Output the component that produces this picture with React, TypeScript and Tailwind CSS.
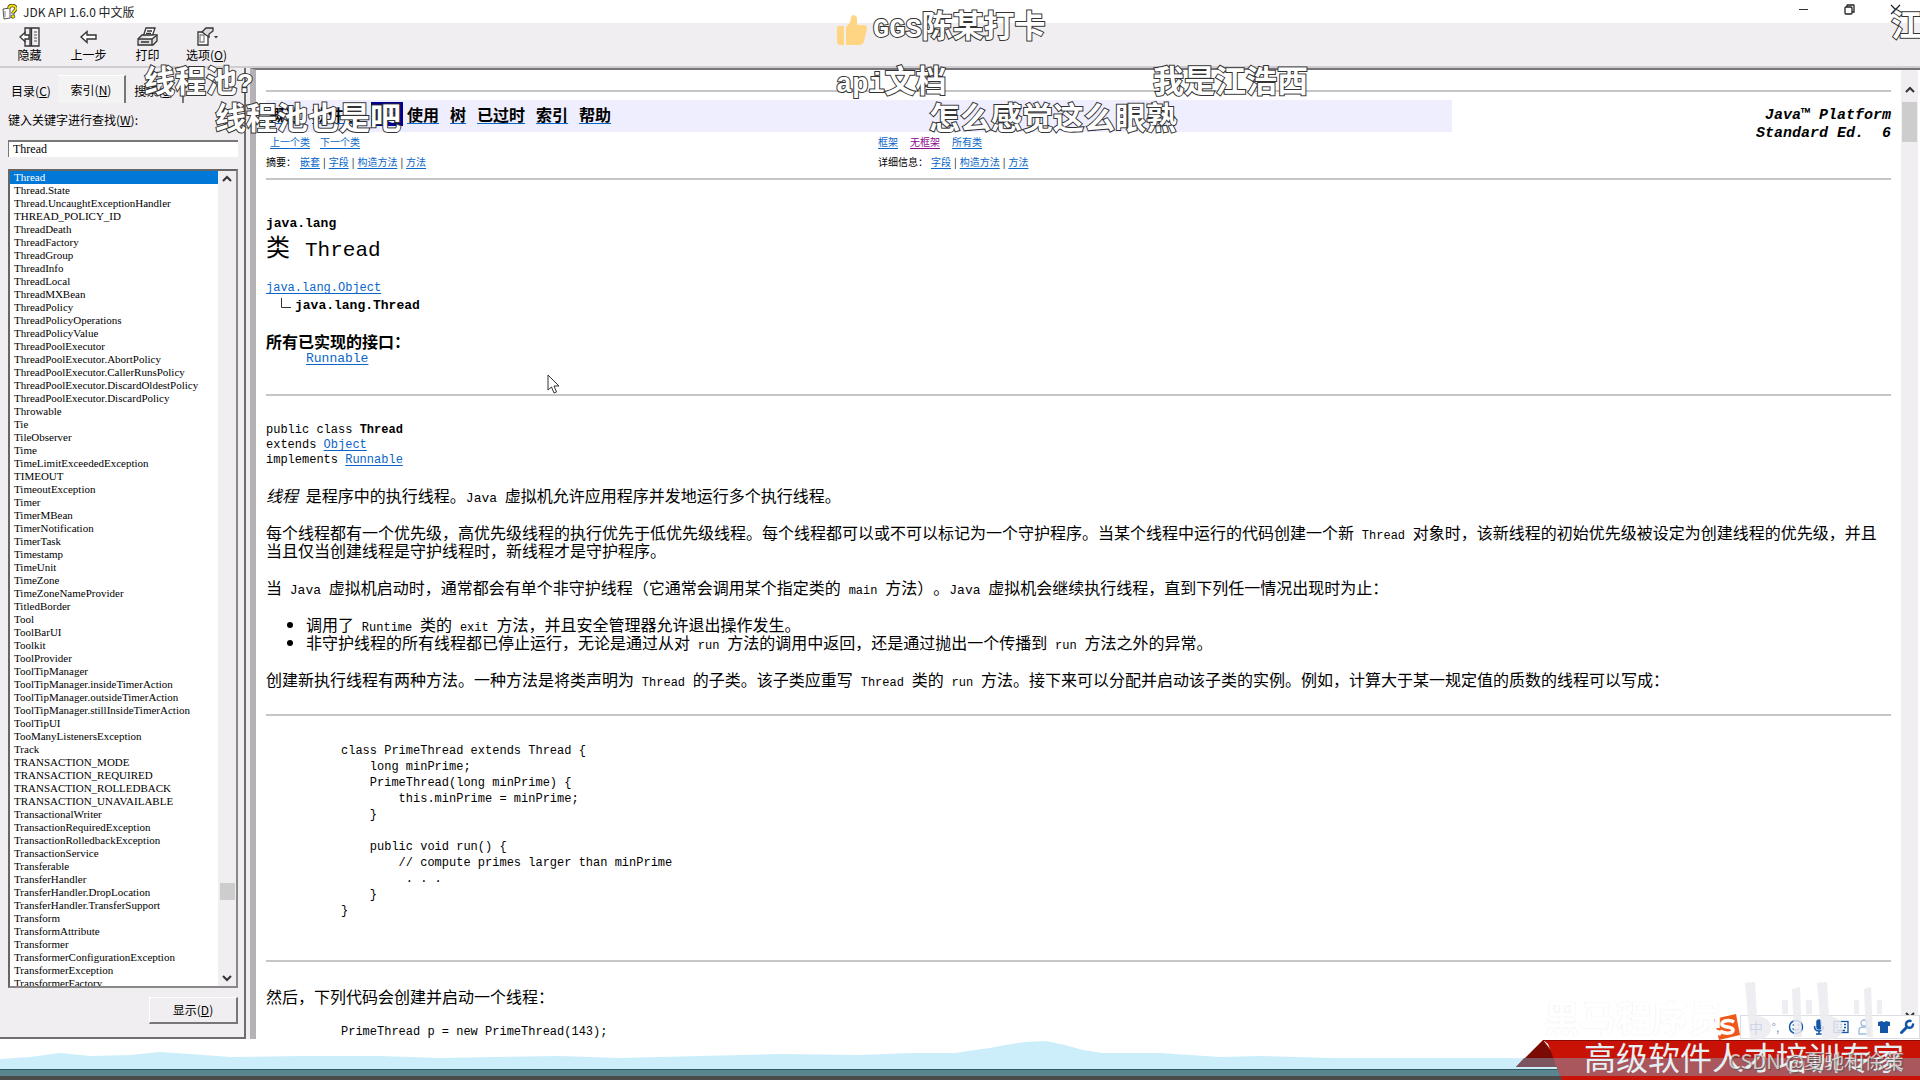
import React, { useState } from "react";

const indexEntries = [
  "Thread", "Thread.State", "Thread.UncaughtExceptionHandler", "THREAD_POLICY_ID", "ThreadDeath",
  "ThreadFactory", "ThreadGroup", "ThreadInfo", "ThreadLocal", "ThreadMXBean", "ThreadPolicy",
  "ThreadPolicyOperations", "ThreadPolicyValue", "ThreadPoolExecutor", "ThreadPoolExecutor.AbortPolicy",
  "ThreadPoolExecutor.CallerRunsPolicy", "ThreadPoolExecutor.DiscardOldestPolicy",
  "ThreadPoolExecutor.DiscardPolicy", "Throwable", "Tie", "TileObserver", "Time",
  "TimeLimitExceededException", "TIMEOUT", "TimeoutException", "Timer", "TimerMBean",
  "TimerNotification", "TimerTask", "Timestamp", "TimeUnit", "TimeZone", "TimeZoneNameProvider",
  "TitledBorder", "Tool", "ToolBarUI", "Toolkit", "ToolProvider", "ToolTipManager",
  "ToolTipManager.insideTimerAction", "ToolTipManager.outsideTimerAction",
  "ToolTipManager.stillInsideTimerAction", "ToolTipUI", "TooManyListenersException", "Track",
  "TRANSACTION_MODE", "TRANSACTION_REQUIRED", "TRANSACTION_ROLLEDBACK", "TRANSACTION_UNAVAILABLE",
  "TransactionalWriter", "TransactionRequiredException", "TransactionRolledbackException",
  "TransactionService", "Transferable", "TransferHandler", "TransferHandler.DropLocation",
  "TransferHandler.TransferSupport", "Transform", "TransformAttribute", "Transformer",
  "TransformerConfigurationException", "TransformerException", "TransformerFactory",
];

const primeThreadCode = `class PrimeThread extends Thread {
    long minPrime;
    PrimeThread(long minPrime) {
        this.minPrime = minPrime;
    }

    public void run() {
        // compute primes larger than minPrime
         . . .
    }
}`;

const DocLink = ({ children, className = "text-[#0a66c8]" }: { children: React.ReactNode; className?: string }) => (
  <a href="#" className={`underline underline-offset-2 ${className}`}>
    {children}
  </a>
);

const Code = ({ children }: { children: React.ReactNode }) => (
  <code className="font-['Liberation_Mono',monospace] text-[12px] leading-[0px]">{children}</code>
);

const Latin = ({ children }: { children: React.ReactNode }) => (
  <span className="font-['Liberation_Mono',monospace] text-[13px] leading-[0px]">{children}</span>
);

const Rule = ({ className = "" }: { className?: string }) => (
  <hr className={`h-[2px] border-0 bg-[#c6c6c8] ${className}`} />
);

const Chevron = ({ down = false }: { down?: boolean }) => (
  <svg className="h-2 w-3" viewBox="0 0 12 8" fill="none" stroke="#333" strokeWidth="2">
    <path d={down ? "M2 2l4 4 4-4" : "M2 6l4-4 4 4"} />
  </svg>
);

const TitleBar = () => (
  <header className="flex h-[23px] items-center justify-between bg-white pl-[2px] pr-[19px]">
    <div className="flex items-center gap-[6px]">
      <svg className="h-4 w-[15px]" viewBox="0 0 15 16">
        <path d="M1 5l7-1v10l-6 1z" fill="#fff" stroke="#555" />
        <path d="M3 7v6M8 14l4-1V9" stroke="#888" fill="none" />
        <path d="M7 4.500C7 2 9 1.500 10.500 1.500S14 2.500 14 4.500 11 7 11 9.500" fill="none" stroke="#333" strokeWidth="3.400" />
        <path d="M7 4.500C7 2 9 1.500 10.500 1.500S14 2.500 14 4.500 11 7 11 9" fill="none" stroke="#f5e000" strokeWidth="2" />
        <circle cx="11" cy="12.500" r="1.800" fill="#f5e000" stroke="#333" strokeWidth=".7" />
      </svg>
      <h1 className="text-[12px] leading-4 text-[#222]">JDK API 1.6.0 中文版</h1>
    </div>
    <div className="flex items-center gap-[35px] pb-1">
      <button aria-label="最小化">
        <svg className="h-[11px] w-[11px]" viewBox="0 0 11 11" stroke="#333"><path d="M1 5.500h9" /></svg>
      </button>
      <button aria-label="还原">
        <svg className="h-[11px] w-[11px]" viewBox="0 0 11 11" fill="none" stroke="#222" strokeWidth="1.300">
          <rect x="1" y="3" width="7" height="7" rx="1" />
          <path d="M3 3V1.500Q3 1 3.500 1H9.500Q10 1 10 1.500V8H8" />
        </svg>
      </button>
      <button aria-label="关闭">
        <svg className="h-[11px] w-[11px]" viewBox="0 0 11 11" stroke="#222" strokeWidth="1.300"><path d="M1 1l9 9M10 1l-9 9" /></svg>
      </button>
    </div>
  </header>
);

const toolButtons = [
  {
    label: "隐藏",
    icon: (
      <g fill="none" stroke="#333" strokeWidth="1.300">
        <path d="M6 6V1H20V19H6V14" />
        <path d="M11 1V19M12.500 1V19" />
        <path d="M15 5h3M15 8h3M15 11h3M15 14h3" stroke="#888" />
        <path d="M1 10L6 5.500V8H10V12H6V14.500Z" fill="#fff" />
      </g>
    ),
  },
  {
    label: "上一步",
    icon: <path d="M3 10L9 4.500V8H18V12H9V15.500Z" fill="#fff" stroke="#333" strokeWidth="1.400" />,
  },
  {
    label: "打印",
    icon: (
      <g fill="#fff" stroke="#333" strokeWidth="1.300">
        <path d="M6 10L9 1H18L15 10Z" />
        <path d="M10 4h5M9 6.500h5" />
        <path d="M1 12L5 8H20V14L16 18H1Z" fill="#ddd" />
        <path d="M1 12H15L20 8M15 12V18M4 15H12" />
      </g>
    ),
  },
  {
    label: "选项",
    hotkey: "O",
    icon: (
      <g fill="#fff" stroke="#333" strokeWidth="1.300">
        <path d="M2 5H12V18H2Z" />
        <path d="M4 8H8V15H4Z" stroke="#888" />
        <path d="M6 5L10 1H17V4L13 7V10L10 8Z" fill="#ddd" />
        <path d="M18 9h4l-2 2.500z" fill="#333" stroke="none" />
      </g>
    ),
  },
];

const Toolbar = () => (
  <nav className="flex h-[45px] border-b-2 border-[#cfcdd0] bg-[#f0eef0]">
    {toolButtons.map((b) => (
      <button key={b.label} className="flex w-[59px] flex-col items-center pt-1 text-[12px] leading-4 text-black">
        <svg className="h-5 w-[22px]" viewBox="0 0 22 20">{b.icon}</svg>
        <span>
          {b.label}
          {b.hotkey && <>(<u>{b.hotkey}</u>)</>}
        </span>
      </button>
    ))}
  </nav>
);

const IndexPanel = () => {
  const [keyword, setKeyword] = useState("Thread");
  const [selected, setSelected] = useState("Thread");

  return (
    <aside className="flex w-[246px] shrink-0 flex-col border-r-2 border-b-2 border-[#6e6e70] bg-[#f0eef0] pt-[7px] pr-[6px] pb-[13px] pl-[8px] text-[12px] text-black">
      <div className="-ml-1 flex h-[28px] shrink-0 leading-4">
        <button className="w-[54px] pt-1">目录(<u>C</u>)</button>
        <button className="w-[68px] border-t border-r-2 border-t-white border-r-[#777] bg-[#f4f3f4]">索引(<u>N</u>)</button>
        <button className="w-[58px] border-r-2 border-[#777] pt-1">搜索(<u>S</u>)</button>
      </div>
      <label htmlFor="keyword" className="mt-[9px] leading-4">
        键入关键字进行查找(<u>W</u>):
      </label>
      <input
        id="keyword"
        value={keyword}
        onChange={(e) => setKeyword(e.target.value)}
        className="mt-3 h-[17px] shrink-0 border-t-2 border-l border-[#777] bg-white pb-[2px] pl-1 font-['Liberation_Serif',serif] text-[12px] outline-none"
      />
      {/* Keyword list */}
      <div className="mt-3 flex min-h-0 flex-1 border-2 border-t-[#666] border-r-[#888] border-b-[#888] border-l-[#666] bg-white">
        <ul role="listbox" aria-label="索引" className="min-w-0 flex-1 overflow-hidden font-['Liberation_Serif',serif] text-[11px] leading-[13px]">
          {indexEntries.map((name) => (
            <li
              key={name}
              role="option"
              aria-selected={name === selected}
              onClick={() => setSelected(name)}
              className={`pl-1 whitespace-nowrap ${name === selected ? "bg-[#0078d7] text-white" : ""}`}
            >
              {name}
            </li>
          ))}
        </ul>
        <div className="flex w-[18px] flex-col items-center bg-[#f0eef0] py-1">
          <Chevron />
          <div className="flex-[700_1_0%]" />
          <div className="h-[17px] w-[15px] bg-[#cdcdcd]" />
          <div className="flex-[74_1_0%]" />
          <Chevron down />
        </div>
      </div>
      <button className="mt-[9px] h-[27px] w-[89px] shrink-0 self-end border border-r-2 border-b-2 border-white border-r-[#777] border-b-[#777] bg-[#f0eef0]">
        显示(<u>D</u>)
      </button>
    </aside>
  );
};

const DocHeader = () => (
  <div className="mt-2 flex">
    <div className="w-[73%]">
      <nav className="flex h-8 items-center gap-[11px] bg-[#eeeeff] pb-1 pl-[3px] text-[16px] leading-6 font-bold text-black">
        <DocLink className="text-black decoration-[#0a66c8]">概述</DocLink>
        <DocLink className="text-black decoration-[#0a66c8]">软件包</DocLink>
        <span className="-mr-[7px] bg-[#00008b] px-2 text-white">类</span>
        {["使用", "树", "已过时", "索引", "帮助"].map((t) => (
          <DocLink key={t} className="text-black decoration-[#0a66c8]">{t}</DocLink>
        ))}
      </nav>
      <div className="flex h-[22px] items-center pb-[2px] text-[10px]">
        <div className="flex w-[612px] gap-[10px] pl-1">
          <DocLink>上一个类</DocLink>
          <DocLink>下一个类</DocLink>
        </div>
        <div className="flex gap-3">
          <DocLink>框架</DocLink>
          <DocLink className="text-[#8b0a8b]">无框架</DocLink>
          <DocLink>所有类</DocLink>
        </div>
      </div>
      <div className="flex h-4 items-center text-[10px]">
        <div className="flex w-[612px] gap-[3px]">
          <span className="w-[31px]">摘要：</span>
          <DocLink>嵌套</DocLink>|<DocLink>字段</DocLink>|<DocLink>构造方法</DocLink>|<DocLink>方法</DocLink>
        </div>
        <div className="flex gap-[3px]">
          <span className="w-[50px]">详细信息：</span>
          <DocLink>字段</DocLink>|<DocLink>构造方法</DocLink>|<DocLink>方法</DocLink>
        </div>
      </div>
    </div>
    <p className="flex-1 pt-[7px] text-right font-['Liberation_Mono',monospace] text-[15px] leading-[18px] font-bold text-black italic">
      Java™ Platform
      <br />
      Standard Ed.&nbsp; 6
    </p>
  </div>
);

const DocPage = () => (
  <main className="ml-1 flex min-w-0 flex-1 overflow-hidden border-t-2 border-l-[6px] border-t-[#77757a] border-l-[#b4b2b6] bg-white">
    <article className="min-w-0 flex-1 overflow-hidden pt-5 pr-[10px] pl-[10px] text-[16px] leading-[18px] text-black">
      <Rule />
      <DocHeader />
      <Rule className="mt-2" />

      <h2 className="mt-9">
        <span className="block font-['Liberation_Mono',monospace] text-[13px] leading-4 font-bold">java.lang</span>
        <span className="flex h-[30px] items-baseline gap-[15px] text-[24px] leading-[28px]">
          类
          <span className="font-['Liberation_Mono',monospace] text-[21px]">Thread</span>
        </span>
      </h2>
      <div className="mt-[17px] font-['Liberation_Mono',monospace] text-[12px] leading-[18px]">
        <DocLink>java.lang.Object</DocLink>
        <div className="flex pl-[14px] text-[13px] font-bold">
          <svg className="mr-1 h-[18px] w-[11px]" viewBox="0 0 11 18" fill="none" stroke="#333">
            <path d="M1.500 1V10.500H11" />
          </svg>
          java.lang.Thread
        </div>
      </div>
      <dl className="mt-[17px]">
        <dt className="font-bold">所有已实现的接口：</dt>
        <dd className="pl-10 font-['Liberation_Mono',monospace] text-[13px]"><DocLink>Runnable</DocLink></dd>
      </dl>
      <Rule className="mt-[26px]" />

      <div className="mt-[27px] font-['Liberation_Mono',monospace] text-[12px] leading-[15px]">
        <div>public class <b>Thread</b></div>
        <div>extends <DocLink>Object</DocLink></div>
        <div>implements <DocLink>Runnable</DocLink></div>
      </div>
      <p className="mt-[18px]">
        <em>线程</em><Latin> </Latin>是程序中的执行线程。<Latin>Java </Latin>虚拟机允许应用程序并发地运行多个执行线程。
      </p>
      <p className="mt-[19px]">
        每个线程都有一个优先级，高优先级线程的执行优先于低优先级线程。每个线程都可以或不可以标记为一个守护程序。当某个线程中运行的代码创建一个新<Latin> </Latin><Code>Thread</Code><Latin> </Latin>对象时，该新线程的初始优先级被设定为创建线程的优先级，并且
        <br />
        当且仅当创建线程是守护线程时，新线程才是守护程序。
      </p>
      <p className="mt-[19px]">
        当<Latin> Java </Latin>虚拟机启动时，通常都会有单个非守护线程（它通常会调用某个指定类的<Latin> </Latin><Code>main</Code><Latin> </Latin>方法）。<Latin>Java </Latin>虚拟机会继续执行线程，直到下列任一情况出现时为止：
      </p>
      <ul className="mt-[19px] list-disc pl-10">
        <li>调用了<Latin> </Latin><Code>Runtime</Code><Latin> </Latin>类的<Latin> </Latin><Code>exit</Code><Latin> </Latin>方法，并且安全管理器允许退出操作发生。</li>
        <li>非守护线程的所有线程都已停止运行，无论是通过从对<Latin> </Latin><Code>run</Code><Latin> </Latin>方法的调用中返回，还是通过抛出一个传播到<Latin> </Latin><Code>run</Code><Latin> </Latin>方法之外的异常。</li>
      </ul>
      <p className="mt-[19px]">
        创建新执行线程有两种方法。一种方法是将类声明为<Latin> </Latin><Code>Thread</Code><Latin> </Latin>的子类。该子类应重写<Latin> </Latin><Code>Thread</Code><Latin> </Latin>类的<Latin> </Latin><Code>run</Code><Latin> </Latin>方法。接下来可以分配并启动该子类的实例。例如，计算大于某一规定值的质数的线程可以写成：
      </p>
      <Rule className="mt-[26px]" />
      <pre className="mt-[27px] pl-[75px] font-['Liberation_Mono',monospace] text-[12px] leading-4">{primeThreadCode}</pre>
      <Rule className="mt-[41px]" />
      <p className="mt-[25px]">然后，下列代码会创建并启动一个线程：</p>
      <pre className="mt-[19px] pl-[75px] font-['Liberation_Mono',monospace] text-[12px] leading-4">PrimeThread p = new PrimeThread(143);</pre>
    </article>
    {/* Page scrollbar */}
    <div className="mr-[2px] flex w-[17px] shrink-0 flex-col items-center bg-[#f0eef0] pt-4 pb-5">
      <Chevron />
      <div className="mt-2 h-10 w-[15px] bg-[#cdcdcd]" />
      <div className="flex-1" />
      <Chevron down />
    </div>
  </main>
);

const Wave = () => (
  <footer className="relative h-[41px] shrink-0 bg-white">
    <svg className="block h-full w-full" viewBox="0 0 1920 41" preserveAspectRatio="none">
      <path
        d="M0 20L30 18 60 14 90 17 130 16 160 13 190 15 230 18 300 17 380 17 440 19 560 17 620 19 700 17 780 15 860 16 910 14 955 14 975 11 990 9 1005 6 1025 3 1046 2 1065 6 1083 11 1103 14 1160 14 1190 16 1220 18 1260 17 1330 19 1500 19 1700 20 1920 19V31H0Z"
        fill="#cceefa"
      />
      <rect y="30" width="1920" height="7" fill="#5a8690" />
      <rect y="30" width="1920" height="1" fill="#2f5a64" />
      <rect y="37" width="1920" height="4" fill="#4b4b4b" />
    </svg>
    <svg className="absolute right-0 bottom-0 h-10 w-[404px]" viewBox="0 0 404 40">
      <path d="M0 27L27 0L48 27Z" fill="#7c0a04" />
      <path d="M27 0H404V40H46L32 4Z" fill="#c91206" />
      <path d="M8 18H37L42 27H0Z" fill="#7d5560" />
      <path d="M37 18H404V36H44Z" fill="#a9565c" />
      <path d="M27 0H404" stroke="#8a0a04" strokeWidth="2" />
    </svg>
    <p className="absolute right-4 bottom-2 font-['Noto_Sans_CJK_SC',sans-serif] text-[32px] leading-8 whitespace-nowrap text-[#e4f0f4]">
      高级软件人才培训专家
    </p>
  </footer>
);

const InputMethodBar = () => (
  <div className="absolute right-0 bottom-[41px] flex h-6 w-[180px] items-center justify-between border border-[#dcdce4] bg-white pr-1 pl-2 text-[#1256a8]">
    <svg className="absolute -left-7 h-7 w-7" viewBox="0 0 28 28">
      <path d="M1 6L23 1L27 22L6 27Z" fill="#f0581a" />
      <path d="M21 9C16 6 8 8 9 11.500S20 13 20 17 11 21 7 18" fill="none" stroke="#fff" strokeWidth="3.500" />
    </svg>
    <span className="text-[14px] leading-4">中</span>
    <span className="text-[12px] leading-4 text-[#8a9cc0]">°,</span>
    <svg className="h-4 w-4" viewBox="0 0 16 16" fill="none" stroke="currentColor" strokeWidth="1.500">
      <circle cx="8" cy="8" r="6.500" />
      <path d="M5.500 5v2M10.500 5v2M4.500 9.500Q8 13 11.500 9.500" />
    </svg>
    <svg className="h-4 w-3" viewBox="0 0 12 16" fill="none" stroke="currentColor" strokeWidth="1.500">
      <rect x="4" y="1" width="4" height="9" rx="2" fill="currentColor" />
      <path d="M1.500 7Q1.500 12 6 12T10.500 7M6 12V15M3 15H9" />
    </svg>
    <svg className="h-[14px] w-4" viewBox="0 0 16 14" fill="none" stroke="currentColor" strokeWidth="1.300">
      <rect x="1" y="1.500" width="14" height="11" />
      <path d="M3 4.500h2M7 4.500h2M11 4.500h2M3 7.500h2M7 7.500h2M11 7.500h2M4 10.500h8" />
    </svg>
    <svg className="h-4 w-3 opacity-40" viewBox="0 0 12 16" fill="none" stroke="currentColor" strokeWidth="1.300">
      <circle cx="6" cy="4" r="3" />
      <path d="M1 15V11Q1 8 6 8T11 11V15Z" />
    </svg>
    <svg className="h-[14px] w-3" viewBox="0 0 12 14" fill="currentColor">
      <path d="M0 2L4 1Q6 3 8 1L12 2V6H10V13H2V6H0Z" />
    </svg>
    <svg className="h-4 w-4" viewBox="0 0 16 16" fill="none" stroke="currentColor" strokeLinecap="round">
      <path d="M2.500 13.500L8 8" strokeWidth="3" />
      <path d="M11.500 2A3.500 3.500 0 1 0 14 5.500" strokeWidth="2.500" />
    </svg>
  </div>
);

const danmaku = [
  { text: "线程池?", place: "left-[144px] top-[66px]" },
  { text: "线程池也是吧", place: "left-[215px] top-[103px]" },
  { text: "api文档", place: "left-[836px] top-[66px]" },
  { text: "我是江浩西", place: "left-[1153px] top-[66px]" },
  { text: "怎么感觉这么眼熟", place: "left-[929px] top-[103px]" },
  { text: "江浩西", place: "left-[1891px] top-[10px]" },
];

// Bullet comments and pointer that float above the window
const Overlay = () => (
  <div className="pointer-events-none absolute inset-0 overflow-hidden font-['Liberation_Mono','Noto_Sans_CJK_SC',sans-serif] text-[27px] leading-9 font-bold whitespace-nowrap text-white">
    <div className="absolute top-[11px] left-[837px] flex items-center gap-[6px]">
      <svg className="h-[30px] w-[30px]" viewBox="0 0 30 30" fill="#ffd483">
        <path d="M2 11H7V30H3Q0 30 0 26V14Q0 11 2 11Z" />
        <path d="M9 12Q14 8 14 2Q15 0 17 0Q20 1 20 4V10H27Q30 10 30 14L27 26Q26 30 22 30H9Z" />
      </svg>
      <span className="[paint-order:stroke] [-webkit-text-stroke:2px_#333]">
        GGS<span className="text-[31px]">陈某打卡</span>
      </span>
    </div>
    {danmaku.map((d) => (
      <span key={d.text} className={`absolute [paint-order:stroke] [-webkit-text-stroke:2px_#333] ${d.place}`}>
        {d.text.split(/([\x00-\x7f]+)/).map((part, i) => (
          <span key={i} className={/[\x00-\x7f]/.test(part) ? "" : "text-[31px]"}>{part}</span>
        ))}
      </span>
    ))}
    <svg className="absolute top-[374px] left-[547px] h-5 w-[13px]" viewBox="0 0 13 20">
      <path d="M1 1V16L4.500 13L7 19L9.500 18L7 12H12Z" fill="#fff" stroke="#333" />
    </svg>
  </div>
);

const Watermarks = () => (
  <div className="pointer-events-none absolute right-0 bottom-0 h-[100px] w-[380px] whitespace-nowrap">
    <span className="absolute bottom-[44px] left-1 text-[36px] leading-10 font-bold text-white [text-shadow:0_0_1px_#e2e0e2]">
      黑马程序员
    </span>
    <svg className="absolute bottom-[38px] left-[200px] h-[60px] w-[146px]" viewBox="0 0 146 60" fill="#ececf0" opacity=".85">
      <path d="M5 1L15 0L17 34Q32 36 31 47Q30 58 10 58Z" />
      <path d="M52 7L60 5L62 55H54ZM42 18H48V32H42ZM66 18H72V32H66Z" />
      <path d="M77 1L87 0L89 34Q104 36 103 47Q102 58 82 58Z" />
      <path d="M124 7L131 5L133 55H126ZM114 18H119V32H114ZM137 18H142V32H137Z" />
    </svg>
    <span className="absolute right-4 bottom-[7px] text-[20px] leading-6 text-white/70 [text-shadow:1px_1px_1px_#555]">
      CSDN @夏驰和徐策
    </span>
  </div>
);

const App = () => {
  return (
    <div className="relative flex h-screen flex-col overflow-hidden bg-white font-['Noto_Sans_CJK_SC',sans-serif] [text-spacing-trim:space-all]">
      <TitleBar />
      <Toolbar />
      <div className="flex min-h-0 flex-1 bg-[#f0eef0]">
        <IndexPanel />
        <DocPage />
      </div>
      <Wave />
      <InputMethodBar />
      <Watermarks />
      <Overlay />
    </div>
  );
};

export default App;
